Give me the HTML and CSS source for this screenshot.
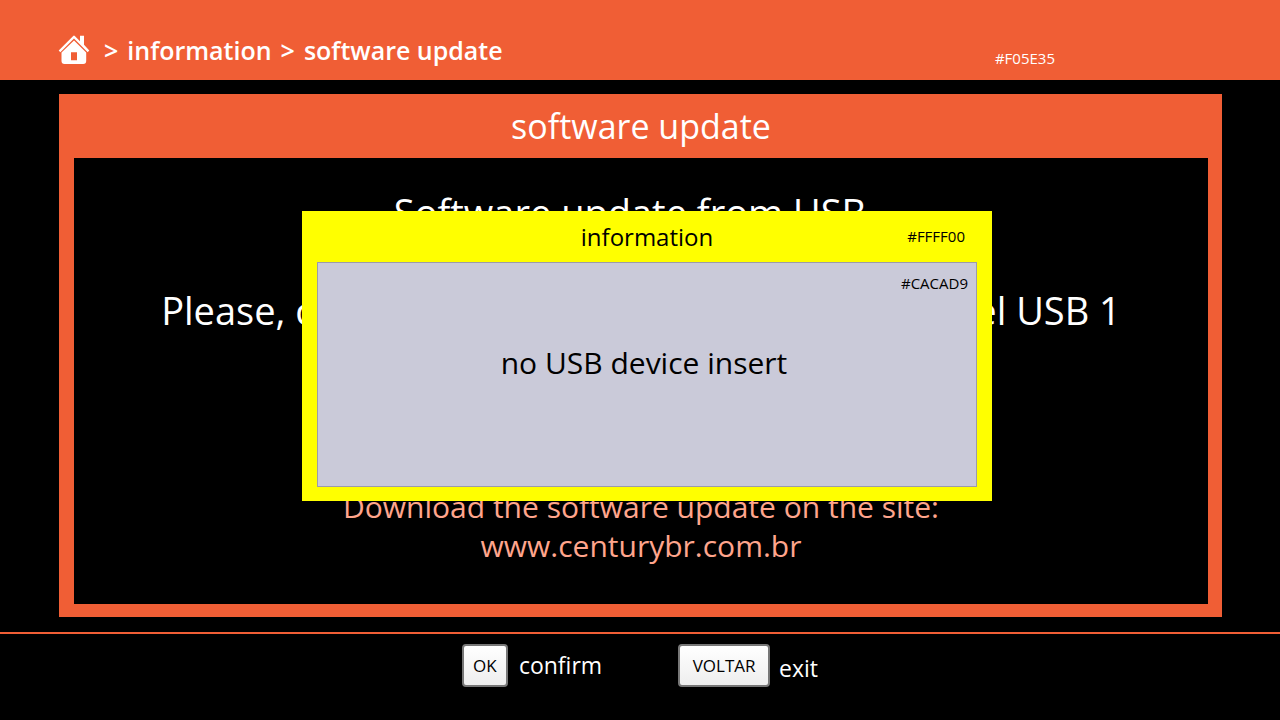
FILE: index.html
```html
<!DOCTYPE html>
<html lang="en">
<head>
<meta charset="utf-8">
<meta name="viewport" content="width=device-width, initial-scale=1">
<title>Software update</title>
<link rel="stylesheet" href="styles.css">
</head>
<body>
<header class="topbar">
  <nav class="breadcrumb" aria-label="Breadcrumb">
    <svg class="home" viewBox="0 0 32 30" aria-hidden="true">
      <path fill="#fff" d="M22 .8h4v9l5.300 5.700-1.600 1.700L16 3.400 2.300 17.200.7 15.500 15.200 1q.8-.8 1.600 0L22 6.200z"/>
      <path fill="#fff" fill-rule="evenodd" d="M16 5.400 28.200 17.600V26q0 3-3 3H6.500q-3 0-3-3v-8.400zM13 17.200v8h6v-8z"/>
    </svg>
    <span class="crumbs"><span>&gt;</span><span>information</span><span>&gt;</span><span>software update</span></span>
  </nav>
  <span class="swatch-name">#F05E35</span>
</header>

<main class="stage">
  <section class="panel">
    <h1 class="panel-title">software update</h1>
    <div class="panel-body">
      <p class="source">Software update from USB.</p>
      <p class="prompt">Please, connect the USB drive to the front panel USB 1</p>
      <p class="download">Download the software update on the site:<br>www.centurybr.com.br</p>
    </div>
  </section>
  <section class="dialog" role="dialog" aria-labelledby="dialog-title">
    <header class="dialog-head">
      <h2 class="dialog-title" id="dialog-title">information</h2>
      <span class="dialog-swatch">#FFFF00</span>
    </header>
    <div class="dialog-body">
      <span class="body-swatch">#CACAD9</span>
      <p class="message">no USB device insert</p>
    </div>
  </section>
</main>

<footer class="actions">
  <div class="action">
    <button class="key" id="ok" type="button">OK</button>
    <label for="ok">confirm</label>
  </div>
  <div class="action action-exit">
    <button class="key key-wide" id="back" type="button">VOLTAR</button>
    <label for="back">exit</label>
  </div>
</footer>
</body>
</html>
```
FILE: styles.css
```css
* { box-sizing: border-box; }

body {
  margin: 0;
  min-height: 100vh;
  display: flex;
  flex-direction: column;
  background: #000;
  color: #fff;
  font-family: "Open Sans", "Noto Sans", sans-serif;
}

h1, h2, p { margin: 0; font-weight: 400; }

.topbar {
  display: flex;
  align-items: center;
  justify-content: space-between;
  min-height: 80px;
  padding: 20px 225px 0 58px;
  background: #f05e35;
}

.breadcrumb { display: flex; align-items: center; gap: 14px; }
.home { width: 32px; height: 30px; }
.crumbs {
  display: flex;
  gap: 9px;
  font-size: 25px;
  line-height: 32px;
  font-weight: 600;
}
.swatch-name { font-size: 15px; line-height: 20px; padding-top: 16px; }

.stage {
  position: relative;
  flex: 1;
  display: flex;
  padding: 14px 58px 15px 59px;
}

.panel {
  flex: 1;
  display: flex;
  flex-direction: column;
  padding: 0 14px 13px 15px;
  background: #f05e35;
}

.panel-title { font-size: 34px; line-height: 64px; text-align: center; }

.panel-body {
  flex: 1;
  padding: 28px 0;
  background: #000;
  text-align: center;
}

.source { font-size: 38px; line-height: 52px; padding-right: 12px; }
.prompt { font-size: 38px; line-height: 52px; padding-top: 46px; }
.download {
  padding-top: 151px;
  color: #ffa58c;
  font-size: 30px;
  line-height: 39px;
}

.dialog {
  position: absolute;
  top: 131px;
  bottom: 131px;
  left: 302px;
  right: 288px;
  display: flex;
  flex-direction: column;
  padding: 0 15px 14px;
  background: #ff0;
  color: #000;
}

.dialog-head {
  display: grid;
  grid-template-columns: 1fr auto 1fr;
  align-items: center;
  line-height: 51px;
}
.dialog-title { grid-column: 2; font-size: 24px; }
.dialog-swatch { justify-self: end; padding-right: 12px; font-size: 15px; }

.dialog-body {
  flex: 1;
  display: flex;
  flex-direction: column;
  padding: 10px 8px;
  border: 1px solid #9c9ba9;
  background: #cacad9;
}
.body-swatch { align-self: flex-end; font-size: 15px; line-height: 20px; }
.message {
  padding: 48px 6px 0 0;
  font-size: 30px;
  line-height: 44px;
  text-align: center;
}

.actions {
  display: flex;
  justify-content: center;
  gap: 76px;
  min-height: 88px;
  padding-top: 10px;
  border-top: 2px solid #f05e35;
}
.action { display: flex; align-items: flex-start; gap: 11px; font-size: 23px; line-height: 42px; }
.action-exit { gap: 9px; }
.action-exit label { padding-top: 3px; }

.key {
  min-width: 46px;
  height: 43px;
  padding: 0;
  border: 2px solid #777;
  border-radius: 4px;
  background: linear-gradient(#fff, #eee);
  color: #000;
  font: 17px/38px "Open Sans", "Noto Sans", sans-serif;
}
.key-wide { min-width: 92px; }
```
